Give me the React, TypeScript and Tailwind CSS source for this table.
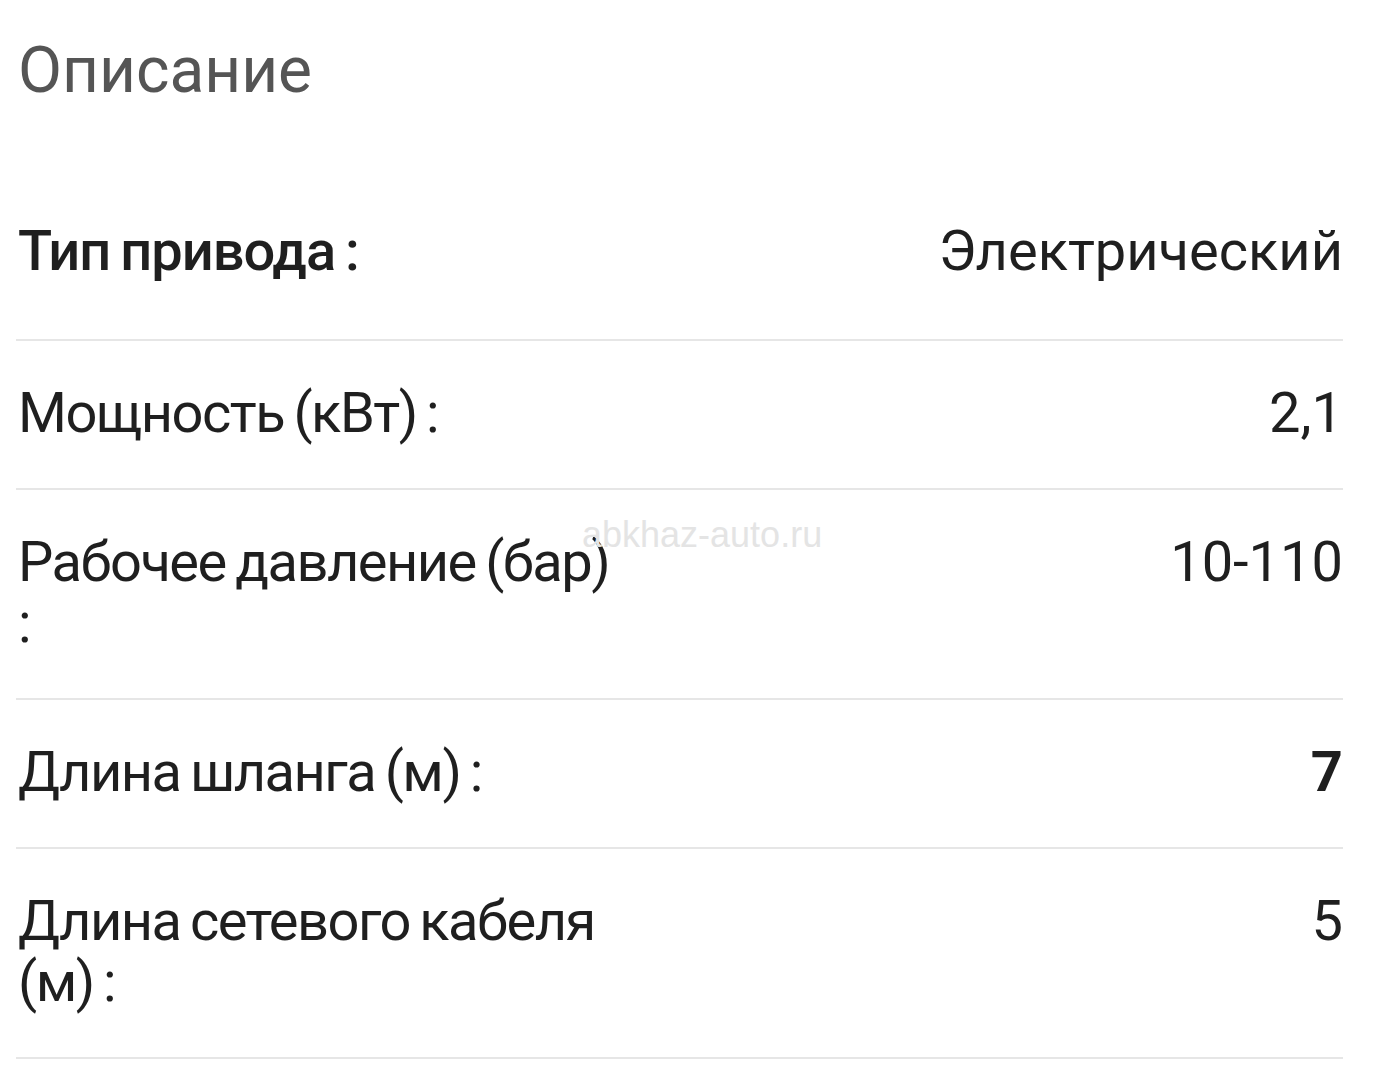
const SPECS = [
  { label: 'Тип привода :', value: 'Электрический', labelBold: true, valueBold: false },
  { label: 'Мощность (кВт) :', value: '2,1', labelBold: false, valueBold: false },
  { label: 'Рабочее давление (бар) :', value: '10-110', labelBold: false, valueBold: false },
  { label: 'Длина шланга (м) :', value: '7', labelBold: false, valueBold: true },
  { label: 'Длина сетевого кабеля (м) :', value: '5', labelBold: false, valueBold: false },
];

export default function App() {
  return (
    <div className="relative min-h-screen bg-white font-['Roboto','Liberation_Sans',sans-serif] text-[#1f1f1f]">
      <div className="pl-4 pr-[57px] pt-[33px]">
        {/* Заголовок */}
        <h1 className="text-[64px] leading-[76px] text-[#555555] pl-[2px]">Описание</h1>

        {/* Характеристики */}
        <div className="mt-[70px]">
          {SPECS.map(({ label, value, labelBold, valueBold }, i) => (
            <div
              key={label}
              className={`flex justify-between items-start gap-8 pt-[42px] border-b-2 border-[#e6e6e6] text-[56px] leading-[61px] ${
                i === 0 ? 'pb-[57px]' : 'pb-[44px]'
              }`}
            >
              <div
                className={`w-[600px] shrink-0 pl-[2px] [word-spacing:-3px] ${
                  labelBold ? 'font-medium tracking-[-1px]' : 'tracking-[-1.5px]'
                }`}
              >
                {label}
              </div>
              <div className={`text-right ${valueBold ? 'font-bold' : ''}`}>{value}</div>
            </div>
          ))}
        </div>
      </div>

      {/* Водяной знак */}
      <div className="absolute left-[582px] top-[508px] text-[36px] text-[#e4e4e4] font-['Liberation_Sans',sans-serif] pointer-events-none">
        abkhaz-auto.ru
      </div>
    </div>
  );
}
